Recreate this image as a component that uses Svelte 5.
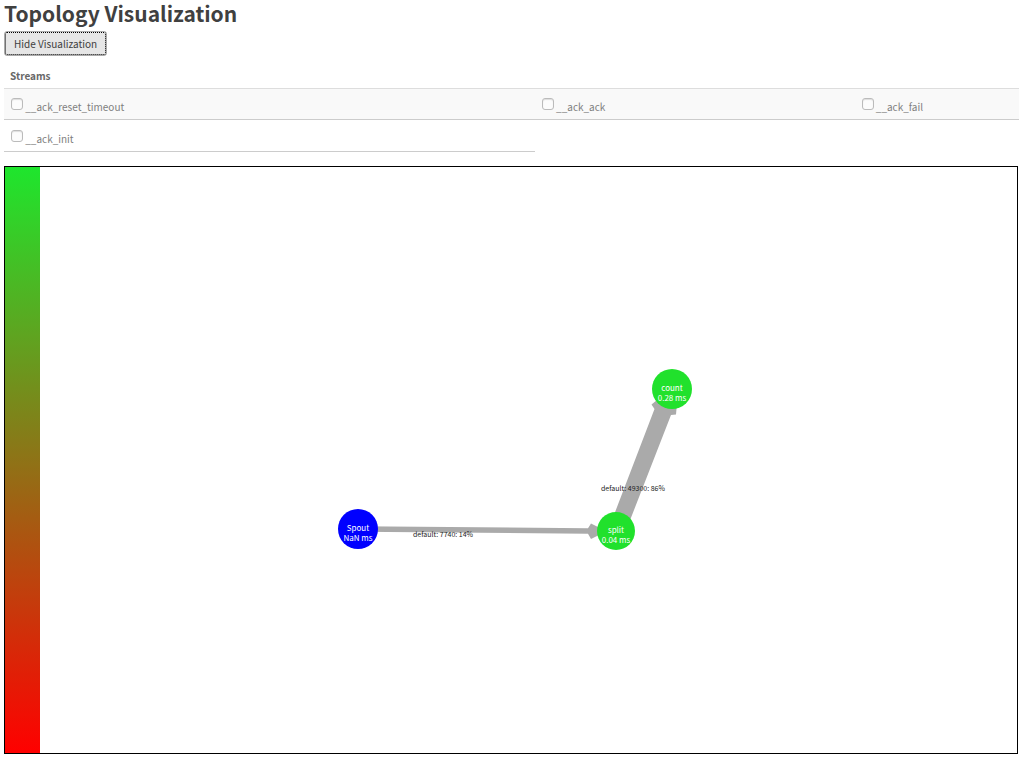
<script>
  let visible = $state(true);
  const rows = [
    ['__ack_reset_timeout', '__ack_ack', '__ack_fail'],
    ['__ack_init'],
  ];
  const nodes = [
    { name: 'Spout', latency: 'NaN ms', x: 353, y: 362, r: 20, fill: '#0000ff' },
    { name: 'split', latency: '0.04 ms', x: 611, y: 364, r: 19, fill: '#21e12c' },
    { name: 'count', latency: '0.28 ms', x: 667, y: 222, r: 20, fill: '#21e12c' },
  ];
</script>

<main>
  <h2>Topology Visualization</h2>
  <button type="button" onclick={() => (visible = !visible)}>
    {visible ? 'Hide' : 'Show'} Visualization
  </button>

  {#if visible}
    <table>
      <colgroup><col class="first" /><col class="second" /><col /></colgroup>
      <thead>
        <tr><th colspan="3">Streams</th></tr>
      </thead>
      <tbody>
        {#each rows as row}
          <tr>
            {#each row as stream}
              <td>
                <input type="checkbox" id={stream} />
                <label for={stream}>{stream}</label>
              </td>
            {/each}
          </tr>
        {/each}
      </tbody>
    </table>

    <div class="canvas">
      <svg viewBox="0 0 1012 586" role="img" aria-label="Topology graph">
        <defs>
          <linearGradient id="latency" x1="0" y1="0" x2="0" y2="1">
            <stop offset="0" stop-color="#1ee62d" />
            <stop offset="1" stop-color="#ff0000" />
          </linearGradient>
        </defs>
        <rect width="35" height="586" fill="url(#latency)" />
        <g fill="#aaaaaa">
          <path d="M353 359.2 L583 361.2 L586 356.5 L595 361 V367.5 L586 372 L583 366.8 L353 364.8 Z" />
          <path d="M604 361 L649.5 242 L646.5 237.5 L657 229 L672 236 L671 247.5 L666 248 L622 361 Z" />
        </g>
        <text class="edge" x="408" y="370">default: 7740: 14%</text>
        <text class="edge" x="596" y="324">default: 49300: 86%</text>
        {#each nodes as node}
          <circle cx={node.x} cy={node.y} r={node.r} fill={node.fill} />
          <text class="node" x={node.x} y={node.y + 2}>{node.name}</text>
          <text class="node" x={node.x} y={node.y + 12}>{node.latency}</text>
        {/each}
      </svg>
    </div>
  {/if}
</main>

<style>
  :global(body) {
    background: #fff;
  }
  main {
    padding-left: 4px;
    font: 10px/20px "Noto Sans CJK SC", "Noto Sans", sans-serif;
    color: #808080;
  }
  h2 {
    margin: 0;
    font-size: 21px;
    line-height: 26px;
    font-weight: 700;
    color: #404040;
  }
  button {
    display: block;
    height: 25px;
    margin: 5px 0 9px;
    padding: 0 9px;
    border: 1px solid #aaa;
    border-radius: 3px;
    outline: 1px dotted #000;
    outline-offset: -2px;
    background: #e6e6e6;
    font: inherit;
    line-height: 23px;
    color: #404040;
  }
  table {
    width: 100%;
    table-layout: fixed;
    border-collapse: collapse;
  }
  .first {
    width: 52.3%;
  }
  .second {
    width: 31.5%;
  }
  th {
    height: 22px;
    padding: 0 6px 1px;
    text-align: left;
    font-weight: 700;
    color: #686868;
    border-bottom: 1px solid #ddd;
  }
  td {
    height: 29px;
    padding: 0 6px 2px;
    vertical-align: bottom;
    border-bottom: 1px solid #ccc;
  }
  tbody tr:first-child td {
    height: 28px;
    background: #f9f9f9;
  }
  td input {
    appearance: none;
    width: 12px;
    height: 12px;
    margin: 0 0 0 1px;
    border: 1px solid #bbb;
    border-radius: 3px;
    vertical-align: 1px;
    background: #fcfcfc;
    box-shadow: inset 0 1px 1px #ddd;
  }
  td input:checked {
    background: #777;
  }
  .canvas {
    margin: 14px 1px 4px 0;
    border: 1px solid #000;
  }
  svg {
    display: block;
    width: 100%;
  }
  .edge {
    font-size: 7px;
    fill: #222;
  }
  .node {
    font-size: 8px;
    fill: #fff;
    text-anchor: middle;
  }
</style>
